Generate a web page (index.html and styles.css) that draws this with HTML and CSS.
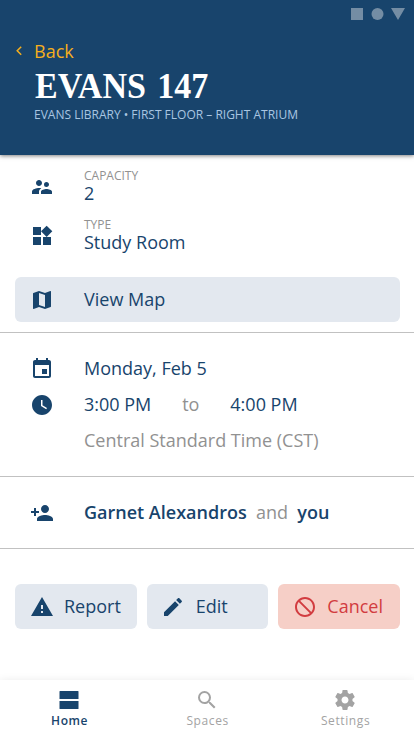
FILE: index.html
```html
<!DOCTYPE html>
<html lang="en">
<head>
<meta charset="utf-8">
<meta name="viewport" content="width=device-width, initial-scale=1">
<title>Evans 147</title>
<link rel="stylesheet" href="styles.css">
</head>
<body>
<div class="screen">
  <header class="header">
    <div class="system">
      <svg width="54" height="12" viewBox="0 0 54 12"><path d="M0 0h12v12H0zM40 0h14l-7 12z"/><circle cx="26.5" cy="6" r="6"/></svg>
    </div>
    <a class="back"><svg class="chevron" width="6" height="10" viewBox="0 0 6 10"><path d="M5.2.8 1.2 4.8l4 4"/></svg><span>Back</span></a>
    <h1 class="title">EVANS 147</h1>
    <p class="subtitle">EVANS LIBRARY • FIRST FLOOR – RIGHT ATRIUM</p>
  </header>
  <main class="content">
    <section class="facts">
      <div class="row fact">
        <svg class="icon" viewBox="0 0 24 24"><path d="M16.500 12c1.380 0 2.490-1.120 2.490-2.500S17.880 7 16.500 7a2.500 2.500 0 0 0 0 5zM9 11c1.660 0 2.990-1.340 2.990-3S10.660 5 9 5C7.340 5 6 6.340 6 8s1.340 3 3 3zm7.500 3c-1.830 0-5.500.920-5.500 2.750V19h11v-2.250c0-1.830-3.670-2.750-5.500-2.750zM9 13c-2.330 0-7 1.170-7 3.500V19h7v-2.250c0-.850.330-2.340 2.370-3.470C10.500 13.100 9.660 13 9 13z"/></svg>
        <div class="pair"><div class="label">CAPACITY</div><div class="value">2</div></div>
      </div>
      <div class="row fact">
        <svg class="icon" viewBox="0 0 24 24"><path d="M13 13v8h8v-8h-8zM3 21h8v-8H3v8zM3 3v8h8V3H3zm13.660-1.310L11 7.340 16.660 13l5.660-5.660-5.660-5.650z"/></svg>
        <div class="pair"><div class="label">TYPE</div><div class="value">Study Room</div></div>
      </div>
    </section>
    <a class="button map"><svg class="icon" viewBox="0 0 24 24"><path d="M20.500 3l-.160.030L15 5.100 9 3 3.360 4.900c-.210.070-.360.250-.360.480V20.500c0 .280.220.500.500.500l.160-.030L9 18.900l6 2.100 5.640-1.900c.210-.070.360-.250.360-.480V3.500c0-.280-.220-.500-.500-.500zM15 19l-6-2.110V5l6 2.110V19z"/></svg><span>View Map</span></a>
    <section class="schedule">
      <div class="row line"><svg class="icon" viewBox="0 0 24 24"><path d="M17 12h-5v5h5v-5zM16 1v2H8V1H6v2H5c-1.110 0-1.990.900-1.990 2L3 19c0 1.100.890 2 2 2h14c1.100 0 2-.900 2-2V5c0-1.100-.900-2-2-2h-1V1h-2zm3 18H5V8h14v11z"/></svg><span>Monday, Feb 5</span></div>
      <div class="row line"><svg class="icon" viewBox="0 0 24 24"><path d="M12 2C6.500 2 2 6.500 2 12s4.500 10 10 10 10-4.500 10-10S17.500 2 12 2zm4.200 14.200L11 13V7h1.500v5.200l4.500 2.700-.800 1.300z"/></svg><div class="times"><span>3:00 PM</span><span class="muted">to</span><span>4:00 PM</span></div></div>
      <div class="line zone muted"><span>Central Standard Time (CST)</span></div>
    </section>
    <section class="row people">
      <svg class="icon" viewBox="0 0 24 24"><path d="M15 12c2.210 0 4-1.790 4-4s-1.790-4-4-4-4 1.790-4 4 1.790 4 4 4zm-9-2V7H4v3H1v2h3v3h2v-3h3v-2H6zm9 4c-2.670 0-8 1.340-8 4v2h16v-2c0-2.660-5.330-4-8-4z"/></svg>
      <div class="names"><b>Garnet Alexandros</b><span class="muted">and</span><b>you</b></div>
    </section>
    <section class="actions">
      <a class="button"><svg class="icon" viewBox="0 0 24 24"><path d="M1 21h22L12 2 1 21zm12-3h-2v-2h2v2zm0-4h-2v-4h2v4z"/></svg><span>Report</span></a>
      <a class="button"><svg class="icon" viewBox="0 0 24 24"><path d="M3 17.250V21h3.750L17.810 9.940l-3.750-3.750L3 17.250zM20.710 7.040c.390-.390.390-1.020 0-1.410l-2.340-2.340c-.390-.390-1.020-.390-1.410 0l-1.830 1.830 3.750 3.750 1.830-1.830z"/></svg><span>Edit</span></a>
      <a class="button danger"><svg class="icon" viewBox="0 0 24 24"><path d="M12 2C6.480 2 2 6.480 2 12s4.480 10 10 10 10-4.480 10-10S17.520 2 12 2zM4 12c0-4.420 3.580-8 8-8 1.850 0 3.550.630 4.900 1.690L5.690 16.900A7.902 7.902 0 0 1 4 12zm8 8c-1.850 0-3.550-.630-4.900-1.690L18.310 7.100A7.902 7.902 0 0 1 20 12c0 4.420-3.580 8-8 8z" transform="rotate(90 12 12)"/></svg><span>Cancel</span></a>
    </section>
  </main>
  <nav class="tabs">
    <a class="tab active"><svg class="icon" viewBox="0 0 24 24"><path d="M2.500 13h19v7.500a.5.500 0 0 1-.5.500H3a.5.500 0 0 1-.5-.5zM3 3h18a.5.500 0 0 1 .5.500V11h-19V3.500A.5.500 0 0 1 3 3z"/></svg><span>Home</span></a>
    <a class="tab"><svg class="icon" viewBox="0 0 24 24"><path d="M15.500 14h-.790l-.280-.270A6.471 6.471 0 0 0 16 9.500 6.500 6.500 0 1 0 9.500 16c1.610 0 3.090-.590 4.230-1.570l.270.280v.790l5 4.990L20.490 19l-4.990-5zm-6 0C7.010 14 5 11.990 5 9.500S7.010 5 9.500 5 14 7.010 14 9.500 11.990 14 9.500 14z"/></svg><span>Spaces</span></a>
    <a class="tab"><svg class="icon" viewBox="0 0 24 24"><path d="M19.430 12.980c.040-.320.070-.640.070-.980s-.030-.660-.070-.980l2.110-1.650c.190-.150.240-.420.120-.640l-2-3.460c-.120-.220-.390-.300-.610-.220l-2.490 1c-.520-.400-1.080-.730-1.690-.980l-.380-2.650A.488.488 0 0 0 14 2h-4c-.250 0-.460.180-.490.420l-.380 2.650c-.610.250-1.170.590-1.690.980l-2.490-1c-.230-.090-.490 0-.610.220l-2 3.460c-.130.220-.070.490.120.640l2.110 1.650c-.040.320-.070.650-.070.980s.030.660.070.980l-2.110 1.650c-.190.150-.240.420-.120.640l2 3.460c.120.220.390.300.610.220l2.490-1c.520.400 1.080.730 1.690.980l.380 2.650c.030.240.240.420.490.420h4c.250 0 .460-.180.490-.420l.380-2.650c.610-.250 1.170-.590 1.690-.980l2.490 1c.230.090.490 0 .610-.220l2-3.460c.120-.220.070-.490-.120-.640l-2.110-1.650zM12 15.500c-1.930 0-3.500-1.570-3.500-3.500s1.570-3.500 3.500-3.500 3.500 1.570 3.500 3.500-1.570 3.500-3.500 3.500z"/></svg><span>Settings</span></a>
  </nav>
</div>
</body>
</html>
```
FILE: styles.css
```css
* { box-sizing: border-box; }
body { margin: 0; background: #fff; font-family: "Open Sans", "Noto Sans", sans-serif; }
h1, p { margin: 0; }
svg { display: block; flex: none; fill: currentColor; }

.screen { display: flex; flex-direction: column; width: 414px; height: 736px; overflow: hidden; color: #18446c; font-size: 18px; line-height: 24px; }

.header { height: 155px; flex: none; background: #18446c; color: #fff; box-shadow: 0 1px 4px rgba(0, 0, 0, .5); }
.system { display: flex; justify-content: flex-end; height: 39px; padding: 8px 9px 0 0; color: #748da4; }
.back { display: flex; align-items: center; gap: 12px; height: 24px; padding-left: 16px; color: #f5ae1d; }
.chevron { fill: none; stroke: currentColor; stroke-width: 1.5; margin-top: -1px; }
.title { margin: 1px 0 -1px 34.5px; font: bold 36px/44px "Liberation Serif", serif; word-spacing: 3px; white-space: nowrap; transform: scaleX(.945); transform-origin: left; }
.subtitle { padding-left: 34px; font-size: 12px; line-height: 16px; color: #a9c6e2; white-space: nowrap; }

.content { flex: 1; }
.icon { width: 24px; height: 24px; }
.row { display: flex; align-items: center; gap: 30px; padding-left: 30px; }
.muted { color: #919191; }
.facts { padding-top: 12px; height: 122px; }
.fact { height: 49px; padding-bottom: 9px; }
.pair { padding-bottom: 3px; }
.label { font-size: 12px; line-height: 16px; color: #919191; }
.value { line-height: 19px; }

.button { display: flex; align-items: center; gap: 10px; height: 45px; padding-left: 15px; border-radius: 6px; background: #e3e8ef; }
.button span, .line span, .names { margin-top: -2px; }
.map { gap: 30px; margin: 0 14px 10px 15px; }
.danger { background: #f6cfc7; color: #d23c40; }

.schedule { height: 145px; padding-top: 18px; border-top: 1px solid #c1c1c1; border-bottom: 1px solid #c1c1c1; }
.line { height: 36px; }
.zone { display: flex; align-items: center; padding-left: 84px; }
.times { display: flex; }
.times .muted { width: 79px; text-align: center; }
.people { height: 72px; border-bottom: 1px solid #c1c1c1; }
.names { display: flex; gap: 9.3px; }
.names b { font-weight: 600; }
.actions { display: grid; grid-template-columns: repeat(3, 1fr); gap: 10px; padding: 35px 14px 0 15px; }
.actions .button { gap: 10.5px; padding-left: 14.5px; }

.tabs { display: grid; grid-template-columns: repeat(3, 1fr); height: 56px; flex: none; box-shadow: 0 0 8px rgba(0, 0, 0, .08); background: #fff; }
.tab { display: flex; flex-direction: column; align-items: center; padding-top: 8px; color: #a3a3a3; font-size: 12px; line-height: 16px; letter-spacing: .6px; }
.tab span { margin: 1px -1.2px 0 0; }
.tab.active .icon { margin-right: 1px; }
.active { color: #18446c; font-weight: 600; }
```
